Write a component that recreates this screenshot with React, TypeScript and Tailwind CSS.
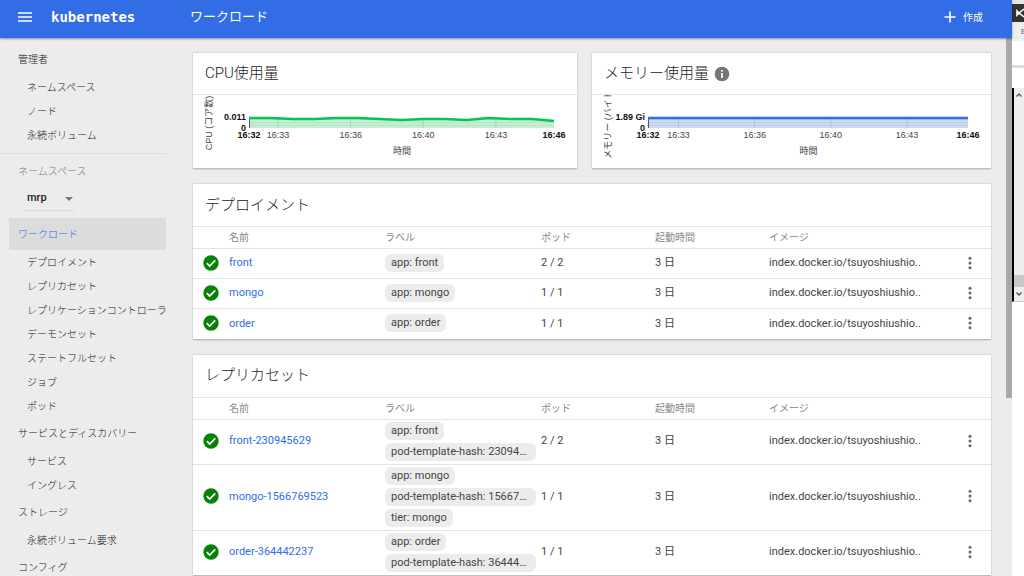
import type { ReactNode } from "react";

type Item = { name: string; labels: string[]; pods: string };

type ChartProps = {
  width: number;
  left: number;
  right: number;
  color: string;
  fill: string;
  points: number[];
  max: string;
  axis: string;
  axisY: number;
};

const adminLinks = ["ネームスペース", "ノード", "永続ボリューム"];

const groups = [
  {
    title: "ワークロード",
    active: true,
    links: [
      "デプロイメント",
      "レプリカセット",
      "レプリケーションコントローラー",
      "デーモンセット",
      "ステートフルセット",
      "ジョブ",
      "ポッド",
    ],
  },
  { title: "サービスとディスカバリー", links: ["サービス", "イングレス"] },
  { title: "ストレージ", links: ["永続ボリューム要求"] },
  { title: "コンフィグ", links: [] },
];

const deployments: Item[] = [
  { name: "front", labels: ["app: front"], pods: "2 / 2" },
  { name: "mongo", labels: ["app: mongo"], pods: "1 / 1" },
  { name: "order", labels: ["app: order"], pods: "1 / 1" },
];

const replicaSets: Item[] = [
  {
    name: "front-230945629",
    labels: ["app: front", "pod-template-hash: 230945629"],
    pods: "2 / 2",
  },
  {
    name: "mongo-1566769523",
    labels: ["app: mongo", "pod-template-hash: 1566769523", "tier: mongo"],
    pods: "1 / 1",
  },
  {
    name: "order-364442237",
    labels: ["app: order", "pod-template-hash: 364442237"],
    pods: "1 / 1",
  },
];

const NavGroup = ({
  title,
  links,
  active,
}: {
  title: string;
  links: string[];
  active?: boolean;
}) => (
  <div>
    <a
      href="#"
      className={
        active
          ? "ml-[9px] flex h-8 items-center bg-[#dcdcdc] pl-[9px] text-[#326de6]"
          : "flex h-[31px] items-center pl-[18px]"
      }
    >
      {title}
    </a>
    {links.map((link) => (
      <a
        key={link}
        href="#"
        className="flex h-6 items-center overflow-hidden pl-[27px] whitespace-nowrap"
      >
        {link}
      </a>
    ))}
  </div>
);

const Card = ({
  title,
  compact,
  children,
}: {
  title: ReactNode;
  compact?: boolean;
  children: ReactNode;
}) => (
  <section className="border-b border-[#bdbdbd] bg-white shadow-[0_0_2px_rgba(0,0,0,0.25)]">
    <h2
      className={`flex items-center gap-[5px] px-3 text-[15px] font-light text-[#222] ${
        compact ? "h-[41px]" : "h-[42px]"
      }`}
    >
      {title}
    </h2>
    {children}
  </section>
);

const Chart = ({
  width,
  left,
  right,
  color,
  fill,
  points,
  max,
  axis,
  axisY,
}: ChartProps) => {
  const step = (right - left) / (points.length - 1);
  const line = points.map((y, i) => `${left + i * step},${y}`).join(" ");
  const ticks = [0.0952, 0.3333, 0.5714, 0.8095];
  const labels = ["16:33", "16:36", "16:40", "16:43"];

  return (
    <svg
      viewBox={`0 0 ${width} 73`}
      className="block w-full border-t border-[#e4e4e4] font-['Liberation_Sans','Noto_Sans_CJK_JP',sans-serif] text-[9px]"
      role="img"
      aria-label={axis}
    >
      <polygon points={`${line} ${right},33 ${left},33`} fill={fill} />
      {[24, 27, 30].map((y) => (
        <path key={y} d={`M${left} ${y}.5H${right}`} stroke="#000" strokeOpacity=".05" />
      ))}
      {ticks.map((t) => (
        <path
          key={t}
          d={`M${left + t * (right - left)} 22V33`}
          stroke="#000"
          strokeOpacity=".1"
        />
      ))}
      <path d={`M${left}.5 22V33`} stroke="#555" />
      <polyline points={line} fill="none" stroke={color} strokeWidth="2.4" />
      <g fill="#444" textAnchor="middle">
        {ticks.map((t, i) => (
          <text key={t} x={left + t * (right - left)} y="43">
            {labels[i]}
          </text>
        ))}
        <text x={width / 2 + 17} y="59">
          時間
        </text>
        <text transform={`translate(19 ${axisY}) rotate(-90)`}>{axis}</text>
      </g>
      <g fill="#111" fontWeight="700" textAnchor="middle">
        <text x={left - 3} y="25" textAnchor="end">
          {max}
        </text>
        <text x={left - 3} y="36" textAnchor="end">
          0
        </text>
        <text x={left} y="43">
          16:32
        </text>
        <text x={right} y="43">
          16:46
        </text>
      </g>
    </svg>
  );
};

const ResourceTable = ({ items }: { items: Item[] }) => (
  <table className="w-full table-fixed text-left text-[11px] text-[#444]">
    <thead>
      <tr className="h-[22px] border-t border-[#e4e4e4] text-[10px] text-[#888]">
        <th className="w-9" />
        <th className="w-[156px] font-normal">名前</th>
        <th className="w-[156px] font-normal">ラベル</th>
        <th className="w-[114px] font-normal">ポッド</th>
        <th className="w-[114px] font-normal">起動時間</th>
        <th className="font-normal">イメージ</th>
        <th className="w-[42px]" />
      </tr>
    </thead>
    <tbody>
      {items.map((item) => (
        <tr key={item.name} className="h-[30px] border-t border-[#e4e4e4]">
          <td className="pb-0.5 pl-2.5">
            <svg viewBox="2 2 20 20" className="size-4">
              <circle cx="12" cy="12" r="9.600" fill="#068206" />
              <path d="M6.8 12.3l3.5 3.5 7-7.2" fill="none" stroke="#fff" strokeWidth="2.2" />
            </svg>
          </td>
          <td>
            <a href="#" className="text-[#326de6]">
              {item.name}
            </a>
          </td>
          <td className="pt-0.5 pb-[3px]">
            <div className="flex flex-col items-start gap-[3px]">
              {item.labels.map((label) => (
                <span
                  key={label}
                  className="h-[18px] max-w-[151px] truncate rounded-md bg-[#ececec] px-1.5 leading-[18px]"
                >
                  {label}
                </span>
              ))}
            </div>
          </td>
          <td>{item.pods}</td>
          <td>3 日</td>
          <td>index.docker.io/tsuyoshiushio..</td>
          <td className="pb-0.5">
            <button type="button" aria-label="メニュー" className="ml-3.5 block">
              <svg viewBox="0 0 14 16" className="h-4 w-3.5" fill="#666">
                <circle cx="7" cy="3.3" r="1.5" />
                <circle cx="7" cy="8" r="1.5" />
                <circle cx="7" cy="12.7" r="1.5" />
              </svg>
            </button>
          </td>
        </tr>
      ))}
    </tbody>
  </table>
);

const WindowEdge = () => (
  <div className="flex w-3 shrink-0 flex-col overflow-hidden bg-white">
    <div className="h-1 bg-[#e6e6e6]" />
    <div className="flex h-[18px] items-center bg-[#333] pl-1">
      <svg viewBox="0 0 8 12" className="h-3 w-2" fill="none" stroke="#fff" strokeWidth="1.6">
        <path d="M1 4v4l2-2zM3 6l5-4M3 6l5 4" />
      </svg>
    </div>
    <div className="h-[19px] bg-[#eee] pl-[9px] text-[8px] leading-[19px] text-[#666]">E</div>
    <div className="h-6" />
    <div className="h-[3px] bg-[#dedede]" />
    <div className="h-5" />
    <div className="flex h-[214px] flex-col items-center justify-between border-b border-l-2 border-b-[#ccc] border-l-black bg-[#eee] pt-1">
      <svg viewBox="0 0 8 6" className="h-1.5 w-2" fill="none" stroke="#555" strokeWidth="1.4">
        <path d="M1.5 4.5L4 2l2.500 2.500" />
      </svg>
      <div className="flex w-full flex-col items-center gap-1 pb-1">
        <div className="h-3 w-full bg-[#c8c8c8]" />
        <svg viewBox="0 0 8 6" className="h-1.5 w-2" fill="none" stroke="#555" strokeWidth="1.4">
          <path d="M1.500 1.500L4 4l2.500-2.500" />
        </svg>
      </div>
    </div>
  </div>
);

const App = () => (
  <div className="flex h-screen overflow-hidden bg-[#ececec] font-[Roboto,'Noto_Sans_CJK_JP',sans-serif] text-[#333]">
    <div className="flex min-w-0 flex-1 flex-col">
      <header className="z-10 flex h-[38px] shrink-0 items-center bg-[#326de6] pb-1 text-white shadow-[0_1px_2px_rgba(0,0,0,0.4)]">
        <div className="flex w-[190px] items-center pl-[18px]">
          <button type="button" aria-label="ナビゲーション">
            <svg viewBox="0 0 14 10" className="h-2.5 w-3.5" fill="#fff">
              <path d="M0 .2h14v1.500H0zM0 4.200h14v1.500H0zM0 8.200h14v1.500H0z" />
            </svg>
          </button>
          <a
            href="#"
            className="ml-[19px] font-['DejaVu_Sans_Mono',monospace] text-sm leading-5 font-bold"
          >
            kubernetes
          </a>
        </div>
        <h1 className="flex-1 text-[13px] leading-5">ワークロード</h1>
        <button type="button" className="mr-[29px] flex items-center gap-[7px] text-[10px]">
          <svg viewBox="0 0 12 12" className="size-3" stroke="#fff" strokeWidth="1.700">
            <path d="M6 .5v11M.5 6h11" />
          </svg>
          作成
        </button>
      </header>

      <div className="flex min-h-0 flex-1">
        <nav className="w-[166px] shrink-0 overflow-hidden pt-1.5 text-[10px] font-light text-[#222]">
          <NavGroup title="管理者" links={adminLinks} />
          <div className="mt-1.5 border-t border-[#dcdcdc] pt-2.5">
            <label htmlFor="namespace" className="block pl-[18px] leading-4 text-[#777]">
              ネームスペース
            </label>
            <div className="relative mt-[7px] ml-[25px] w-[49px] border-b border-[#d8d8d8]">
              <select
                id="namespace"
                defaultValue="mrp"
                className="block h-[23px] w-full appearance-none pl-0.5 text-[11px] font-medium"
              >
                <option>mrp</option>
              </select>
              <svg
                viewBox="0 0 8 4"
                className="pointer-events-none absolute top-2.5 right-px h-1 w-2"
                fill="#777"
              >
                <path d="M0 0h8L4 4z" />
              </svg>
            </div>
          </div>
          <div className="pt-[7px]">
            {groups.map((group) => (
              <NavGroup key={group.title} {...group} />
            ))}
          </div>
        </nav>

        <main className="flex min-w-0 flex-1 flex-col gap-[15px] overflow-hidden pt-[15px] pr-[15px] pl-[27px]">
          <div className="grid grid-cols-[384fr_399fr] gap-[15px]">
            <Card title="CPU使用量" compact>
              <Chart
                width={384}
                left={56}
                right={361}
                color="#00c752"
                fill="#c5eed5"
                points={[23, 23, 24, 24, 23, 23, 24, 25, 24, 24, 25, 23, 24, 24, 26]}
                max="0.011"
                axis="CPU (コア数)"
                axisY={28}
              />
            </Card>
            <Card
              compact
              title={
                <>
                  メモリー使用量
                  <svg viewBox="0 0 16 16" className="size-4">
                    <circle cx="8" cy="8" r="7.300" fill="#757575" />
                    <path d="M8 4v1.800M8 7v5" stroke="#fff" strokeWidth="1.700" />
                  </svg>
                </>
              }
            >
              <Chart
                width={399}
                left={56}
                right={376}
                color="#326de6"
                fill="#cddaf5"
                points={[23, 23]}
                max="1.89 Gi"
                axis="メモリー (バイト)"
                axisY={28}
              />
            </Card>
          </div>
          <Card title="デプロイメント">
            <ResourceTable items={deployments} />
          </Card>
          <Card title="レプリカセット">
            <ResourceTable items={replicaSets} />
          </Card>
        </main>

        <div className="w-1.5 shrink-0">
          <div className="h-[67%] bg-[#a9a9a9]" />
        </div>
      </div>
    </div>
    <WindowEdge />
  </div>
);

export default App;
